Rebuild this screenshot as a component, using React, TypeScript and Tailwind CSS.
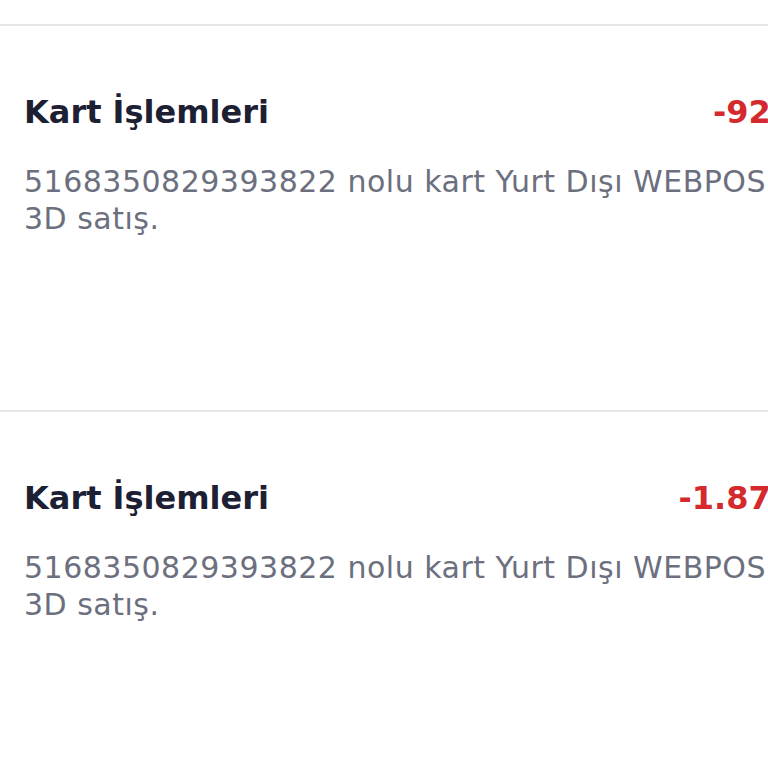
import React from "react";

const items = [{ amount: "-925,00 TL" }, { amount: "-1.875,00 TL" }];

function Item({ amount }: { amount: string }) {
  return (
    <div className="h-[386px] border-t-2 border-[#e6e6e8] pl-6 pt-[66px]">
      <div className="flex w-[879px] items-baseline justify-between">
        <span className="text-[32px] leading-[40px] font-bold text-[#1d2033]">Kart İşlemleri</span>
        <span className="whitespace-nowrap text-[32px] leading-[40px] font-bold text-[#d42a2e]">{amount}</span>
      </div>
      <div className="mt-[31px] text-[30px] leading-[37px] tracking-[0.5px] text-[#6c6f7e]">
        <div className="whitespace-nowrap">5168350829393822 nolu kart Yurt Dışı WEBPOS üzerinden</div>
        <div className="whitespace-nowrap">3D satış.</div>
      </div>
    </div>
  );
}

export default function App() {
  return (
    <div
      className="h-[768px] w-[768px] overflow-hidden bg-white pt-6"
      style={{ fontFamily: "'DejaVu Sans', 'Noto Sans', sans-serif" }}
    >
      <div className="w-[1000px]">
        {items.map((it, i) => (
          <Item key={i} amount={it.amount} />
        ))}
      </div>
    </div>
  );
}
